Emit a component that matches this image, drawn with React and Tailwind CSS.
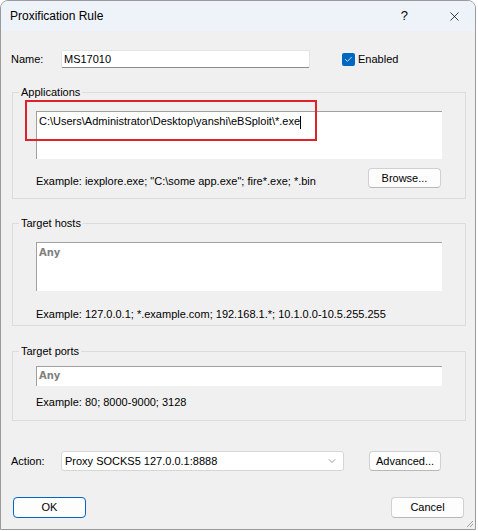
import React from 'react';
import { X, ChevronDown, Check } from 'lucide-react';

const ui = { fontFamily: '"Liberation Sans", Arial, sans-serif' };
const tahoma = { fontFamily: '"DejaVu Sans", "Liberation Sans", sans-serif' };

const Group = ({ title, className, children }) => (
  <fieldset className={`border border-[#dcdcdc] ml-[1px] w-[454px] px-[23px] ${className}`}>
    <legend className="ml-[-17px] px-[2px] text-[11px] leading-[15px] text-black">{title}</legend>
    {children}
  </fieldset>
);

const Button = ({ children, className = '' }) => (
  <button
    className={`h-[20px] bg-[#fdfdfd] border border-[#d0d0d0] border-b-[#b8b8b8] rounded-[4px] text-[11px] text-black ${className}`}
  >
    {children}
  </button>
);

export default function App() {
  return (
    <div className="w-[478px] h-[531px] bg-white" style={ui}>
      <div className="w-[476px] h-[530px] border border-[#9a9a9a] rounded-t-[8px] overflow-hidden bg-[#f0f0f0] flex flex-col relative">
        {/* title bar */}
        <div className="h-[30px] bg-[#eef3f9] flex items-center shrink-0">
          <span className="ml-[9px] text-[12px] text-black">Proxification Rule</span>
          <span className="ml-auto mr-[39px] text-[13px] text-black">?</span>
          <X size={15} strokeWidth={1.2} className="mr-[13px] text-black" />
        </div>

        <div className="flex flex-col px-[10px] pt-[19px]">
          {/* name row */}
          <div className="flex items-center h-[18px]">
            <span className="w-[50px] text-[11px] text-black">Name:</span>
            <div className="w-[249px] h-[18px] bg-white border border-[#e3e3e3] border-b-[#8a8a8a] rounded-[2px] flex items-center px-[2px] text-[11px] text-black">
              MS17010
            </div>
            <div className="ml-[32px] w-[13px] h-[13px] rounded-[2px] bg-[#0067c0] flex items-center justify-center">
              <Check size={9} strokeWidth={2} className="text-white" />
            </div>
            <span className="ml-[3px] text-[11px] text-black">Enabled</span>
          </div>

          {/* applications */}
          <Group title="Applications" className="mt-[17px] pb-[10px] relative">
            <div className="mt-[11px] h-[48px] bg-white border-t border-l border-t-[#a0a0a0] border-l-[#a0a0a0] px-[2px] pt-[2px] text-[11px] leading-[14px]">
              <span className="text-black">C:\Users\Administrator\Desktop\yanshi\eBSploit\*.exe</span>
              <span className="inline-block w-[1px] h-[13px] bg-black align-middle" />
            </div>
            <div className="flex items-center justify-between mt-[9px] h-[20px]">
              <span className="mt-[6px] text-[11px] text-black">Example: iexplore.exe; "C:\some app.exe"; fire*.exe; *.bin</span>
              <Button className="w-[73px] mr-[1px]">Browse...</Button>
            </div>
            <div className="absolute left-[12px] top-[0px] w-[292px] h-[41px] border-2 border-[#e0202a]" />
          </Group>

          {/* target hosts */}
          <Group title="Target hosts" className="mt-[17px] pb-[4px]">
            <div className="mt-[11px] h-[49px] bg-white border-t border-l border-t-[#a0a0a0] border-l-[#a0a0a0] px-[2px] pt-[1px] leading-[14px]">
              <span className="text-[10px] font-bold text-[#808080]" style={tahoma}>Any</span>
            </div>
            <div className="mt-[16px] text-[11px] leading-[14px] text-black">
              Example: 127.0.0.1; *.example.com; 192.168.1.*; 10.1.0.0-10.5.255.255
            </div>
          </Group>

          {/* target ports */}
          <Group title="Target ports" className="mt-[18px] pb-[11px]">
            <div className="mt-[7px] h-[20px] bg-white border-t border-l border-t-[#a0a0a0] border-l-[#a0a0a0] px-[2px] pb-[3px] flex items-center">
              <span className="text-[10px] font-bold text-[#808080]" style={tahoma}>Any</span>
            </div>
            <div className="mt-[9px] text-[11px] leading-[14px] text-black">Example: 80; 8000-9000; 3128</div>
          </Group>

          {/* action row */}
          <div className="flex items-center mt-[30px] h-[20px]">
            <span className="w-[50px] text-[11px] text-black">Action:</span>
            <div className="w-[283px] h-[20px] bg-white border border-[#d6d6d6] rounded-[3px] flex items-center pl-[3px] pr-[5px] text-[11px] text-black">
              <span>Proxy SOCKS5 127.0.0.1:8888</span>
              <ChevronDown size={12} strokeWidth={1.2} className="ml-auto text-[#606060]" />
            </div>
            <Button className="ml-[25px] w-[72px]">Advanced...</Button>
          </div>

          {/* bottom buttons */}
          <div className="flex items-center justify-between mt-[26px] pl-[2px] pr-[1px]">
            <button className="h-[21px] w-[73px] bg-[#fdfdfd] border border-[#0067c0] rounded-[4px] text-[11px] text-black">
              OK
            </button>
            <Button className="h-[21px] w-[73px]">Cancel</Button>
          </div>
        </div>

        {/* resize grip */}
        <svg className="absolute right-[1px] bottom-[1px]" width="9" height="9" viewBox="0 0 9 9">
          <path d="M8 2 L2 8 M8 5 L5 8" stroke="#a0a0a0" strokeWidth="1" />
        </svg>
      </div>
    </div>
  );
}
